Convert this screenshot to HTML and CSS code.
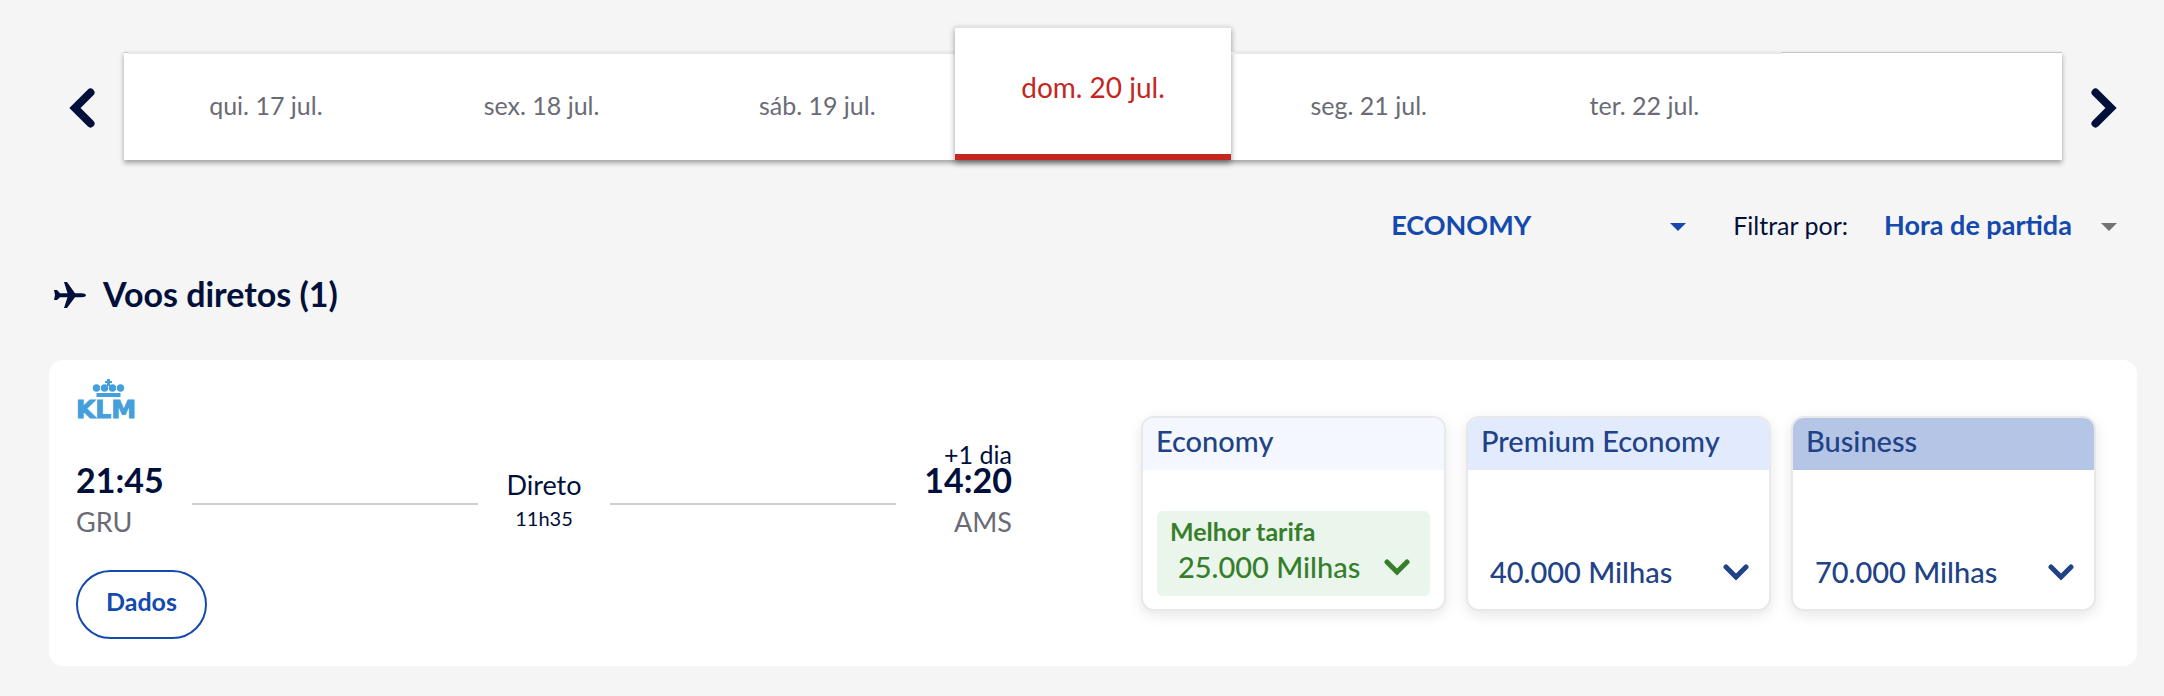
FILE: index.html
```html
<!DOCTYPE html>
<html lang="pt">
<head>
<meta charset="utf-8">
<meta name="viewport" content="width=device-width, initial-scale=1">
<title>Voos</title>
<link rel="stylesheet" href="styles.css">
</head>
<body>
<main class="page">
  <nav class="dates" aria-label="Datas">
    <button class="dates-arrow" type="button" aria-label="Datas anteriores">
      <svg width="26" height="40" viewBox="0 0 26 40"><path d="M21.500 4.500 6 20l15.500 15.500"/></svg>
    </button>
    <div class="dates-bar">
      <button class="date" type="button">qui. 17 jul.</button>
      <button class="date" type="button">sex. 18 jul.</button>
      <button class="date" type="button">sáb. 19 jul.</button>
      <button class="date date-selected" type="button" aria-current="date">dom. 20 jul.</button>
      <button class="date" type="button">seg. 21 jul.</button>
      <button class="date" type="button">ter. 22 jul.</button>
    </div>
    <button class="dates-arrow" type="button" aria-label="Próximas datas">
      <svg width="26" height="40" viewBox="0 0 26 40"><path d="M4.500 4.500 20 20 4.500 35.500"/></svg>
    </button>
  </nav>

  <div class="filters">
    <div class="picker picker-cabin">
      <select class="picker-select" aria-label="Cabine">
        <option>ECONOMY</option>
      </select>
      <svg class="picker-caret" width="16" height="8" viewBox="0 0 16 8"><path d="M0 0h16L8 8z"/></svg>
    </div>
    <label class="filters-label" for="sort">Filtrar por:</label>
    <div class="picker picker-sort">
      <select class="picker-select" id="sort">
        <option>Hora de partida</option>
      </select>
      <svg class="picker-caret picker-caret-muted" width="16" height="8" viewBox="0 0 16 8"><path d="M0 0h16L8 8z"/></svg>
    </div>
  </div>

  <h2 class="heading">
    <svg class="heading-icon" width="34" height="28" viewBox="0 0 34 28"><path d="M1 9h3l3 3.200h7.500L11 1h3l8 11.200h6.500c2.500 0 4.500.8 4.500 2s-2 2-4.500 2H22L14 27h-3l3.500-10.800H7L4 19H1l1-5z"/></svg>
    Voos diretos (1)
  </h2>

  <article class="flight">
    <section class="trip">
      <svg class="airline" width="66" height="40" viewBox="0 0 66 40" role="img" aria-label="KLM">
        <path d="M31 0h3v2h2v2h-2v3h-3V4h-2V2h2z"/>
        <circle cx="20.500" cy="9" r="3.700"/><circle cx="28.500" cy="9" r="3.700"/><circle cx="36.500" cy="9" r="3.700"/><circle cx="44.500" cy="9" r="3.700"/>
        <path d="M20.500 14h24v4h-24z"/>
        <text class="airline-name" x="0" y="39">KLM</text>
      </svg>
      <div class="route">
        <div class="stop">
          <span class="stop-time">21:45</span>
          <span class="stop-code">GRU</span>
        </div>
        <div class="leg">
          <span class="leg-line"></span>
          <div class="leg-info">
            <span class="leg-type">Direto</span>
            <span class="leg-duration">11h35</span>
          </div>
          <span class="leg-line"></span>
        </div>
        <div class="stop stop-arrival">
          <span class="stop-day">+1 dia</span>
          <span class="stop-time">14:20</span>
          <span class="stop-code">AMS</span>
        </div>
      </div>
      <button class="details" type="button">Dados</button>
    </section>

    <section class="fares" aria-label="Tarifas">
      <button class="fare" type="button">
        <span class="fare-name fare-name-economy">Economy</span>
        <span class="fare-body">
          <span class="fare-offer fare-best">
            <span class="fare-tag">Melhor tarifa</span>
            <span class="fare-price">25.000 Milhas
              <svg class="fare-chevron" width="26" height="18" viewBox="0 0 26 18"><path d="M3 4l10 10L23 4"/></svg>
            </span>
          </span>
        </span>
      </button>
      <button class="fare" type="button">
        <span class="fare-name fare-name-premium">Premium Economy</span>
        <span class="fare-body">
          <span class="fare-offer">
            <span class="fare-price">40.000 Milhas
              <svg class="fare-chevron" width="26" height="18" viewBox="0 0 26 18"><path d="M3 4l10 10L23 4"/></svg>
            </span>
          </span>
        </span>
      </button>
      <button class="fare" type="button">
        <span class="fare-name fare-name-business">Business</span>
        <span class="fare-body">
          <span class="fare-offer">
            <span class="fare-price">70.000 Milhas
              <svg class="fare-chevron" width="26" height="18" viewBox="0 0 26 18"><path d="M3 4l10 10L23 4"/></svg>
            </span>
          </span>
        </span>
      </button>
    </section>
  </article>
</main>
</body>
</html>
```

FILE: styles.css
```css
:root {
  --navy: #00103a;
  --blue: #1449ae;
  --fare-blue: #1f4386;
  --green: #377e2b;
  --grey: #6a6b75;
  --red: #c3271f;
}

* {
  box-sizing: border-box;
}

body {
  margin: 0;
  background: #f5f5f5;
  color: var(--navy);
  font-family: Lato, "Open Sans", sans-serif;
  font-size: 25px;
}

button,
select {
  margin: 0;
  padding: 0;
  border: 0;
  background: none;
  color: inherit;
  font: inherit;
  cursor: pointer;
}

.page {
  padding: 52px 27px 29px 49px;
}

/* Date carousel */
.dates {
  display: flex;
  align-items: stretch;
  padding: 0 20px;
}

.dates-arrow {
  display: flex;
  flex: none;
  align-items: center;
  width: 55px;
  padding-top: 4px;
}

.dates-arrow:last-child {
  justify-content: flex-end;
}

.dates-arrow path {
  fill: none;
  stroke: var(--navy);
  stroke-width: 8;
  stroke-linecap: round;
}

.dates-bar {
  display: grid;
  flex: 1;
  grid-template-columns: repeat(7, 1fr);
  height: 108px;
  padding: 0 4px;
  background: #fff;
  box-shadow: inset 0 1px #c4c4c4, 0 3px 5px rgba(0, 0, 0, 0.35);
}

.date {
  padding-bottom: 5px;
  border-top: 2px solid #e8e8e8;
  color: var(--grey);
}

.date-selected {
  margin-top: -26px;
  padding-bottom: 9px;
  border-top: 2px solid #e3e3e3;
  border-bottom: 6px solid var(--red);
  background: #fff;
  box-shadow: 0 3px 6px rgba(0, 0, 0, 0.4);
  color: var(--red);
  font-size: 28px;
}

/* Filters */
.filters {
  display: flex;
  align-items: center;
  justify-content: flex-end;
  height: 44px;
  margin-top: 43px;
  padding-right: 20px;
}

.filters-label {
  margin: 0 36px 0 47px;
}

.picker {
  display: grid;
  align-items: center;
}

.picker-cabin {
  width: 295px;
}

.picker-sort {
  width: 233px;
}

.picker-select {
  grid-area: 1 / 1;
  height: 34px;
  padding-bottom: 2px;
  appearance: none;
  color: var(--blue);
  font-size: 27px;
  font-weight: 700;
}

.picker-caret {
  grid-area: 1 / 1;
  justify-self: end;
  margin-top: 4px;
  fill: var(--blue);
  pointer-events: none;
}

.picker-caret-muted {
  fill: #737373;
}

/* Section heading */
.heading {
  display: flex;
  align-items: center;
  gap: 16px;
  margin: 28px 0 47px 4px;
  font-size: 34px;
  line-height: 38px;
}

.heading-icon {
  margin-top: 2px;
  fill: var(--navy);
}

/* Flight card */
.flight {
  display: grid;
  grid-template-columns: 49fr 50fr;
  align-items: center;
  column-gap: 129px;
  padding: 19px 41px 27px 27px;
  border-radius: 14px;
  background: #fff;
}

.trip {
  display: flex;
  flex-direction: column;
  align-items: flex-start;
}

.airline {
  overflow: visible;
  fill: #459fda;
}

.airline-name {
  stroke: #459fda;
  stroke-width: 1;
  font-family: "DejaVu Sans", sans-serif;
  font-size: 25px;
  font-weight: 700;
}

.route {
  display: flex;
  align-items: flex-end;
  align-self: stretch;
  gap: 28px;
  margin-top: 24px;
}

.stop {
  display: flex;
  flex-direction: column;
}

.stop-arrival {
  align-items: flex-end;
}

.stop-day {
  line-height: 22px;
}

.stop-time {
  font-size: 34px;
  font-weight: 700;
  line-height: 30px;
}

.stop-code {
  margin-top: 11px;
  color: var(--grey);
  font-size: 27px;
  line-height: 32px;
}

.leg {
  display: flex;
  flex: 1;
  align-items: center;
  gap: 28px;
  padding-bottom: 8px;
}

.leg-line {
  flex: 1;
  height: 2px;
  margin-top: 6px;
  background: #d0d0d0;
}

.leg-info {
  display: flex;
  flex-direction: column;
  align-items: center;
  gap: 7px;
}

.leg-type {
  font-size: 27px;
  line-height: 28px;
}

.leg-duration {
  font-size: 20px;
  line-height: 24px;
}

.details {
  height: 69px;
  margin-top: 32px;
  padding: 0 28px 8px;
  border: 2px solid var(--blue);
  border-radius: 35px;
  color: var(--blue);
  font-weight: 700;
}

/* Fares */
.fares {
  display: grid;
  grid-template-columns: repeat(3, 1fr);
  gap: 20px;
  margin-top: 8px;
}

.fare {
  display: flex;
  flex-direction: column;
  height: 195px;
  overflow: hidden;
  border: 2px solid #e7e8ea;
  border-radius: 13px;
  background: #fff;
  box-shadow: 0 4px 14px rgba(0, 0, 0, 0.1);
  color: var(--fare-blue);
  font-size: 29px;
  font-weight: 500;
  text-align: left;
}

.fare-name {
  width: 100%;
  padding: 7px 13px 13px;
  line-height: 32px;
}

.fare-name-economy {
  background: #f4f7fd;
}

.fare-name-premium {
  background: #e2ebfd;
}

.fare-name-business {
  background: #b5c5e5;
}

.fare-body {
  display: flex;
  flex: 1;
  align-items: flex-end;
  width: 100%;
  padding: 0 14px 13px;
}

.fare-offer {
  display: flex;
  flex: 1;
  flex-direction: column;
  padding: 0 6px 2px 8px;
}

.fare-best {
  padding: 6px 20px 7px 13px;
  border-radius: 6px;
  background: #eaf5eb;
  color: var(--green);
}

.fare-tag {
  font-size: 25px;
  font-weight: 700;
  line-height: 28px;
}

.fare-price {
  display: flex;
  align-items: center;
  justify-content: space-between;
  line-height: 44px;
}

.fare-best .fare-price {
  padding-left: 8px;
}

.fare-chevron {
  flex: none;
  fill: none;
  stroke: currentColor;
  stroke-width: 5;
  stroke-linecap: round;
}
```
